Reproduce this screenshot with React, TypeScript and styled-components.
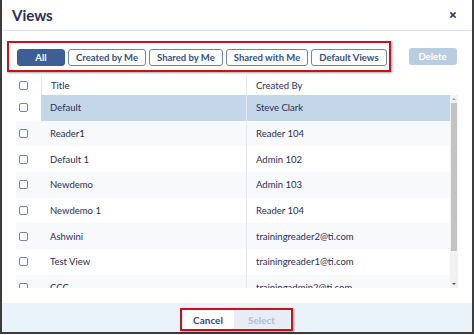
import React, { useState } from "react";
import styled, { createGlobalStyle } from "styled-components";

const GlobalStyle = createGlobalStyle`
  html, body {
    margin: 0;
    padding: 0;
    background: #ffffff;
  }
  body {
    font-family: Lato, "Open Sans", Arial, sans-serif;
    color: #2b2d55;
  }
  * {
    box-sizing: border-box;
  }
`;

const Modal = styled.div`
  width: 474px;
  height: 334px;
  display: flex;
  flex-direction: column;
  background: #ffffff;
  border: 2px solid #3c3c3c;
  border-top: none;
`;

const Header = styled.div`
  height: 31px;
  flex: none;
  display: flex;
  align-items: center;
  justify-content: space-between;
  padding: 0 16px 0 10px;
  border-bottom: 1px solid #dfe5ec;
`;

const Title = styled.h1`
  margin: 0;
  font-size: 15px;
  font-weight: 700;
  color: #2b2d5c;
`;

const CloseButton = styled.button`
  border: none;
  background: none;
  padding: 0;
  display: flex;
  cursor: pointer;
`;

const Toolbar = styled.div`
  flex: none;
  display: flex;
  align-items: center;
  margin: 10px 0 0 5px;
`;

const Highlight = styled.div`
  display: flex;
  flex: none;
  border: 2px solid #c8101e;
  box-shadow: 1px 1px 2px rgba(0, 0, 0, 0.35);
`;

const FilterGroup = styled(Highlight)`
  gap: 3px;
  padding: 6px 2px 4px 8px;
`;

const FilterButton = styled.button<{ $active?: boolean }>`
  flex: none;
  height: 17px;
  min-width: 48px;
  padding: 0 7px;
  white-space: nowrap;
  border: 1px solid ${(p) => (p.$active ? "#3d5f95" : "#6f86a8")};
  border-radius: 3px;
  background: ${(p) => (p.$active ? "#3d5f95" : "#ffffff")};
  color: ${(p) => (p.$active ? "#ffffff" : "#37507a")};
  font-family: inherit;
  font-size: 9.5px;
  font-weight: 700;
  cursor: pointer;
`;

const DeleteButton = styled.button`
  flex: none;
  margin-left: 18px;
  width: 48px;
  height: 17px;
  border: none;
  border-radius: 3px;
  background: #b9cde2;
  color: #ffffff;
  font-family: inherit;
  font-size: 9.5px;
  font-weight: 700;
`;

const Grid = styled.div`
  flex: none;
  margin: 3px 14px 0 14px;
  display: flex;
  flex-direction: column;
`;

const HeadRow = styled.div`
  height: 20px;
  display: grid;
  grid-template-columns: 25px 205px 1fr 8px;
  align-items: stretch;
`;

const HeadCell = styled.div<{ $divider?: boolean }>`
  display: flex;
  align-items: center;
  padding-left: 9px;
  font-size: 9.5px;
  color: #2b2d55;
  border-left: ${(p) => (p.$divider ? "1px solid #e4e9ef" : "none")};
`;

const CheckCell = styled.div`
  display: flex;
  align-items: center;
  padding-left: 3px;
`;

const Checkbox = styled.span`
  width: 9px;
  height: 9px;
  border: 1px solid #6d86aa;
  border-radius: 2px;
  background: #ffffff;
`;

const Body = styled.div`
  height: 193px;
  display: flex;
  overflow: hidden;
`;

const Rows = styled.div`
  flex: 1;
  display: flex;
  flex-direction: column;
`;

const Row = styled.div<{ $striped?: boolean; $selected?: boolean }>`
  flex: none;
  height: 25.67px;
  display: grid;
  grid-template-columns: 25px 205px 1fr;
  background: ${(p) => (p.$striped ? "#f8f9fb" : "#ffffff")};

  > div:not(:first-child) {
    background: ${(p) => (p.$selected ? "#c4d7e9" : "transparent")};
  }
`;

const Cell = styled.div<{ $divider?: boolean }>`
  display: flex;
  align-items: center;
  padding-left: 9px;
  font-size: 9.5px;
  color: #2b2d55;
  white-space: nowrap;
  border-left: ${(p) => (p.$divider ? "1px solid #e4e9ef" : "none")};
`;

const Scrollbar = styled.div`
  width: 8px;
  flex: none;
  display: flex;
  flex-direction: column;
  align-items: center;
  background: #f1f1f1;
`;

const Arrow = styled.div<{ $down?: boolean }>`
  flex: none;
  height: 8px;
  width: 8px;
  display: flex;
  align-items: center;
  justify-content: center;
  &::after {
    content: "";
    border-left: 2px solid transparent;
    border-right: 2px solid transparent;
    ${(p) =>
      p.$down
        ? "border-top: 2px solid #505050;"
        : "border-bottom: 2px solid #a3a3a3;"}
  }
`;

const Track = styled.div`
  flex: 1;
  width: 100%;
  display: flex;
  justify-content: center;
`;

const Thumb = styled.div`
  width: 6px;
  height: 148px;
  background: #c3c3c3;
`;

const Footer = styled.div`
  margin-top: auto;
  height: 29px;
  flex: none;
  display: flex;
  justify-content: center;
  align-items: flex-start;
  padding-top: 5px;
  padding-right: 2px;
  background: #eaf2fa;
`;

const ActionGroup = styled(Highlight)`
  padding: 0 1px;
  height: 23px;
  align-items: center;
`;

const ActionButton = styled.button<{ $primary?: boolean }>`
  height: 19px;
  width: ${(p) => (p.$primary ? "51px" : "56px")};
  border: none;
  border-radius: ${(p) => (p.$primary ? "0 3px 3px 0" : "0")};
  background: ${(p) => (p.$primary ? "#ffffff" : "#e6edf5")};
  box-shadow: ${(p) => (p.$primary ? "1px 0 1px rgba(0,0,0,0.08)" : "none")};
  color: ${(p) => (p.$primary ? "#3a4d73" : "#b3bfcd")};
  font-family: inherit;
  font-size: 10px;
  font-weight: 700;
`;

const filters = [
  "All",
  "Created by Me",
  "Shared by Me",
  "Shared with Me",
  "Default Views",
];

const views = [
  { title: "Default", createdBy: "Steve Clark" },
  { title: "Reader1", createdBy: "Reader 104" },
  { title: "Default 1", createdBy: "Admin 102" },
  { title: "Newdemo", createdBy: "Admin 103" },
  { title: "Newdemo 1", createdBy: "Reader 104" },
  { title: "Ashwini", createdBy: "trainingreader2@ti.com" },
  { title: "Test View", createdBy: "trainingreader1@ti.com" },
  { title: "CCC", createdBy: "trainingadmin2@ti.com" },
];

const App: React.FC = () => {
  const [filter, setFilter] = useState("All");
  const [selected, setSelected] = useState(0);

  return (
    <>
      <GlobalStyle />
      <Modal>
        <Header>
          <Title>Views</Title>
          <CloseButton aria-label="Close">
            <svg width="6" height="6" viewBox="0 0 6 6">
              <path
                d="M1 1L5 5M5 1L1 5"
                stroke="#2d3a60"
                strokeWidth="1.7"
                strokeLinecap="square"
              />
            </svg>
          </CloseButton>
        </Header>
        <Toolbar>
          <FilterGroup>
            {filters.map((f) => (
              <FilterButton
                key={f}
                $active={filter === f}
                onClick={() => setFilter(f)}
              >
                {f}
              </FilterButton>
            ))}
          </FilterGroup>
          <DeleteButton disabled>Delete</DeleteButton>
        </Toolbar>
        <Grid>
          <HeadRow>
            <CheckCell>
              <Checkbox />
            </CheckCell>
            <HeadCell $divider>Title</HeadCell>
            <HeadCell $divider>Created By</HeadCell>
            <div />
          </HeadRow>
          <Body>
            <Rows>
              {views.map((v, i) => (
                <Row
                  key={v.title}
                  $striped={i % 2 === 1}
                  $selected={selected === i}
                  onClick={() => setSelected(i)}
                >
                  <CheckCell>
                    <Checkbox />
                  </CheckCell>
                  <Cell>{v.title}</Cell>
                  <Cell $divider>{v.createdBy}</Cell>
                </Row>
              ))}
            </Rows>
            <Scrollbar>
              <Arrow />
              <Track>
                <Thumb />
              </Track>
              <Arrow $down />
            </Scrollbar>
          </Body>
        </Grid>
        <Footer>
          <ActionGroup>
            <ActionButton $primary>Cancel</ActionButton>
            <ActionButton disabled>Select</ActionButton>
          </ActionGroup>
        </Footer>
      </Modal>
    </>
  );
};

export default App;
